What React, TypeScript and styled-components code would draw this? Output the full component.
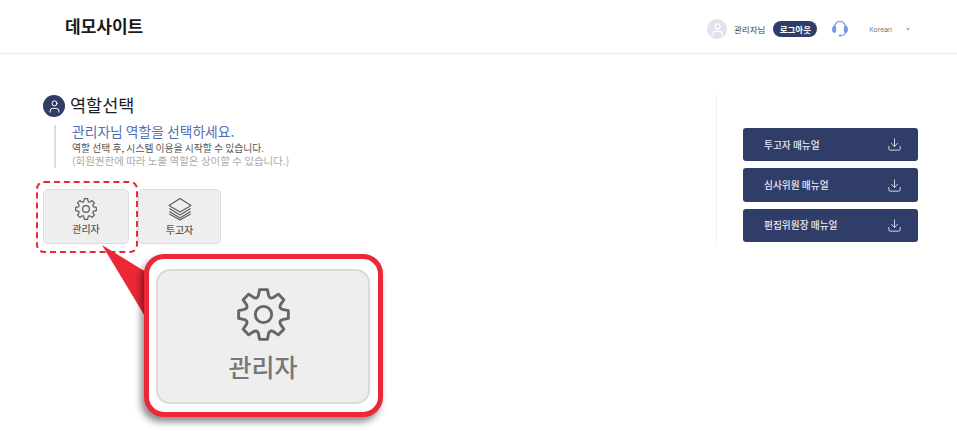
import React from 'react'
import styled, { createGlobalStyle } from 'styled-components'
import { Download, User } from 'lucide-react'

const Navy = '#2f3d68'
const Red = '#ee2737'

const GlobalStyle = createGlobalStyle`
  html, body {
    margin: 0;
    background: #fff;
    font-family: "Noto Sans CJK KR", "Noto Sans", sans-serif;
    overflow: hidden;
  }
  * { box-sizing: border-box; }
`

const Page = styled.div`
  position: relative;
  width: 957px;
  height: 431px;
`

const Header = styled.header`
  display: flex;
  align-items: center;
  height: 54px;
  padding: 0 47px 0 65px;
  border-bottom: 1px solid #ececec;
`

const Logo = styled.h1`
  flex: 1;
  margin: 0;
  padding-bottom: 3px;
  font-size: 17px;
  font-weight: 700;
  color: #1a1a1a;
`

const Tools = styled.div`
  display: flex;
  align-items: center;
  margin-top: 5px;
`

const Avatar = styled.span`
  display: flex;
  align-items: center;
  justify-content: center;
  width: 20px;
  height: 20px;
  border-radius: 50%;
  background: #e1e2ee;
  color: #fff;
`

const UserName = styled.span`
  margin-left: 7px;
  font-size: 8.5px;
  color: #444;
`

const Logout = styled.button`
  width: 44px;
  height: 16px;
  margin-left: 8px;
  padding: 0;
  border: 0;
  border-radius: 8px;
  background: ${Navy};
  color: #fff;
  font: 700 8.5px "Noto Sans CJK KR", sans-serif;
`

const Support = styled.span`
  display: flex;
  margin-left: 15px;
  color: #7a97e8;
`

const Lang = styled.span`
  margin-left: 21px;
  font: 6.8px "Inter", sans-serif;
  color: #777;
`

const Caret = styled.span`
  width: 0;
  height: 0;
  margin-left: 14px;
  border-left: 2.5px solid transparent;
  border-right: 2.5px solid transparent;
  border-top: 3px solid #b5b5b5;
`

const Main = styled.main`
  display: flex;
  padding-top: 41px;
`

const Content = styled.section`
  width: 716px;
  padding-left: 43px;
`

const TitleRow = styled.div`
  display: flex;
  align-items: center;
  gap: 5px;
  height: 22px;
`

const TitleIcon = styled.span`
  display: flex;
  align-items: center;
  justify-content: center;
  width: 22px;
  height: 22px;
  border-radius: 50%;
  background: ${Navy};
  color: #fff;
`

const Title = styled.h2`
  margin: 0;
  padding-bottom: 3px;
  font-size: 17.5px;
  font-weight: 400;
  line-height: 22px;
  color: #1c1c1c;
`

const Notice = styled.div`
  display: flex;
  flex-direction: column;
  height: 43px;
  margin: 8px 0 0 11px;
  padding-left: 16px;
  border-left: 2px solid #ddd;
`

const Lead = styled.p`
  margin: -1px 0 3px;
  font-size: 13.8px;
  line-height: 15px;
  color: #4f6fb5;
`

const Note = styled.p<{ $muted?: boolean }>`
  margin: 0;
  font-size: ${p => (p.$muted ? '10.5px' : '9.8px')};
  line-height: ${p => (p.$muted ? '13px' : '12px')};
  color: ${p => (p.$muted ? '#aaa' : '#555')};
`

const Roles = styled.div`
  display: flex;
  gap: 9px;
  margin-top: 21px;
`

const RoleCard = styled.button<{ $large?: boolean; $width?: number }>`
  display: flex;
  flex-direction: column;
  align-items: center;
  justify-content: center;
  gap: ${p => (p.$large ? '10px' : '3px')};
  width: ${p => (p.$large ? 214 : p.$width ?? 86)}px;
  height: ${p => (p.$large ? '135px' : '55px')};
  padding: 0 0 ${p => (p.$large ? '4px' : '1px')};
  border: ${p => (p.$large ? '2px' : '1px')} solid #dadada;
  border-radius: ${p => (p.$large ? '14px' : '5px')};
  background: #eeeeee;
  color: ${p => (p.$large ? '#777' : '#5c5c5c')};
  font-family: "Noto Sans CJK KR", sans-serif;
  font-size: ${p => (p.$large ? '25px' : '10px')};
  font-weight: 500;
  line-height: 1.2;
`

const Aside = styled.aside`
  display: flex;
  flex-direction: column;
  gap: 6.8px;
  height: 147px;
  padding: 33px 0 0 26px;
  border-left: 1px solid #eeeeee;
`

const ManualButton = styled.button`
  display: flex;
  align-items: center;
  justify-content: space-between;
  width: 175px;
  height: 34px;
  padding: 0 16px 0 21px;
  border: 0;
  border-radius: 3px;
  background: ${Navy};
  color: #e8eaf2;
  font: 500 9.7px "Noto Sans CJK KR", sans-serif;
`

/* 스크린샷 위에 얹은 안내 표시 */
const DashedFrame = styled.div`
  position: absolute;
  left: 36px;
  top: 181px;
  width: 102px;
  height: 72px;
  border: 2px dashed ${Red};
  border-radius: 8px;
`

const Pointer = styled.svg`
  position: absolute;
  left: 100px;
  top: 244px;
`

const Callout = styled.div`
  position: absolute;
  left: 144px;
  top: 254px;
  display: flex;
  align-items: center;
  justify-content: center;
  width: 239px;
  height: 163px;
  padding: 2px 1px 0 0;
  border: 5px solid ${Red};
  border-radius: 20px;
  background: #fff;
  box-shadow: -3px 5px 7px rgba(0, 0, 0, 0.45);
`

// 톱니 8개짜리 기어 외곽선
const gearPath = (() => {
  const teeth = 8
  const outer = 11.4
  const inner = 8.9
  const rad = (deg: number) => (deg * Math.PI) / 180
  const pt = (r: number, deg: number) =>
    `${(12 + r * Math.sin(rad(deg))).toFixed(2)} ${(12 - r * Math.cos(rad(deg))).toFixed(2)}`
  let d = ''
  for (let i = 0; i < teeth; i++) {
    const a = (360 / teeth) * i
    d += `${i === 0 ? 'M' : 'L'}${pt(inner, a - 15)} L${pt(outer, a - 9)} L${pt(outer, a + 9)} L${pt(inner, a + 15)} `
    d += `Q${pt(inner - 1.4, a + 22.5)} ${pt(inner, a + 30)} `
  }
  return d + 'Z'
})()

const GearIcon = ({ size, color }: { size: number; color: string }) => (
  <svg width={size} height={size} viewBox="0 0 24 24" fill="none" stroke={color} strokeWidth="1.3" strokeLinejoin="round">
    <path d={gearPath} />
    <circle cx="12" cy="12" r="3.7" />
  </svg>
)

const StackIcon = () => (
  <svg width="24" height="24" viewBox="0 0 24 24" fill="none" stroke="#5c5c5c" strokeWidth="1.1" strokeLinejoin="round">
    <path d="M12 1.5 L23 8.5 L12 15 L1 8.5 Z" />
    <path d="M1.4 11.5 L12 18 L22.6 11.5" />
    <path d="M1.4 14.5 L12 21 L22.6 14.5" />
    <path d="M1.4 17 L12 23 L22.6 17" />
  </svg>
)

const HeadsetIcon = () => (
  <svg width="16" height="18" viewBox="0 0 16 18" fill="none" stroke="currentColor" strokeWidth="1.2">
    <path d="M2.6 7 A5.4 5.6 0 0 1 13.4 7" />
    <rect x="0.8" y="6.6" width="2.8" height="5.6" rx="1.3" fill="currentColor" />
    <rect x="12.4" y="6.6" width="2.8" height="5.6" rx="1.3" fill="currentColor" />
    <path d="M13.4 12 Q13.2 15.4 9 15.6" />
    <circle cx="8" cy="15.6" r="1.2" fill="currentColor" stroke="none" />
  </svg>
)

const manuals = ['투고자 매뉴얼', '심사위원 매뉴얼', '편집위원장 매뉴얼']

export default function App() {
  return (
    <Page>
      <GlobalStyle />
      <Header>
        <Logo>데모사이트</Logo>
        <Tools>
          <Avatar><User size={15} strokeWidth={2} /></Avatar>
          <UserName>관리자님</UserName>
          <Logout>로그아웃</Logout>
          <Support><HeadsetIcon /></Support>
          <Lang>Korean</Lang>
          <Caret />
        </Tools>
      </Header>
      <Main>
        <Content>
          <TitleRow>
            <TitleIcon><User size={15} strokeWidth={1.6} /></TitleIcon>
            <Title>역할선택</Title>
          </TitleRow>
          <Notice>
            <Lead>관리자님 역할을 선택하세요.</Lead>
            <Note>역할 선택 후, 시스템 이용을 시작할 수 있습니다.</Note>
            <Note $muted>(회원권한에 따라 노출 역할은 상이할 수 있습니다.)</Note>
          </Notice>
          <Roles>
            <RoleCard><GearIcon size={22} color="#5c5c5c" />관리자</RoleCard>
            <RoleCard $width={83}><StackIcon />투고자</RoleCard>
          </Roles>
        </Content>
        <Aside>
          {manuals.map(label => (
            <ManualButton key={label}>
              {label}
              <Download size={15} strokeWidth={1.4} />
            </ManualButton>
          ))}
        </Aside>
      </Main>
      <DashedFrame />
      <Pointer width="50" height="80" viewBox="0 0 50 80">
        <polygon points="2,1 46,28 46,74" fill={Red} />
      </Pointer>
      <Callout>
        <RoleCard $large><GearIcon size={53} color="#666" />관리자</RoleCard>
      </Callout>
    </Page>
  )
}
